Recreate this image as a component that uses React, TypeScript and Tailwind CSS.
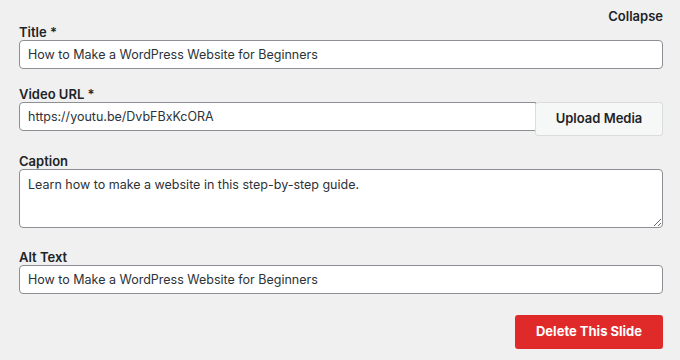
const field =
  "block w-full h-[29px] rounded-[4px] border border-[#8c8f94] bg-white px-[8px] text-[12.5px] text-[#2c3338] outline-none";

function Label({ children }: { children: React.ReactNode }) {
  return (
    <label className="block text-[13px] leading-[16px] font-semibold text-[#1d2327]">
      {children}
    </label>
  );
}

export default function App() {
  return (
    <div
      className="w-[680px] h-[360px] bg-[#f0f0f0] pl-[19px] pr-[17px] pt-[8px] overflow-hidden"
      style={{ fontFamily: "Inter, 'Liberation Sans', sans-serif" }}
    >
      <div className="flex justify-end">
        <button className="text-[13px] leading-[16px] font-semibold text-[#1d2327]">
          Collapse
        </button>
      </div>

      <div>
        <Label>Title *</Label>
        <input
          className={field}
          readOnly
          defaultValue="How to Make a WordPress Website for Beginners"
        />
      </div>

      <div className="mt-[17px]">
        <Label>Video URL *</Label>
        <div className="flex items-start">
          <input
            className={`${field} flex-1 rounded-r-none`}
            readOnly
            defaultValue="https://youtu.be/DvbFBxKcORA"
          />
          <button className="w-[128px] h-[34px] shrink-0 rounded-[3px] border border-[#dcdcde] bg-[#f6f7f7] text-[13px] font-semibold text-[#1d2327] -ml-px">
            Upload Media
          </button>
        </div>
      </div>

      <div className="mt-[17px]">
        <Label>Caption</Label>
        <textarea
          className="block w-full h-[59px] rounded-[4px] border border-[#8c8f94] bg-white px-[8px] pt-[6px] text-[12.5px] leading-[18px] text-[#2c3338] outline-none"
          readOnly
          defaultValue="Learn how to make a website in this step-by-step guide."
        />
      </div>

      <div className="mt-[21px]">
        <Label>Alt Text</Label>
        <input
          className={field}
          readOnly
          defaultValue="How to Make a WordPress Website for Beginners"
        />
      </div>

      <div className="mt-[21px] flex justify-end">
        <button className="w-[148px] h-[34px] rounded-[3px] bg-[#df2a29] text-[13px] font-bold text-white">
          Delete This Slide
        </button>
      </div>
    </div>
  );
}
